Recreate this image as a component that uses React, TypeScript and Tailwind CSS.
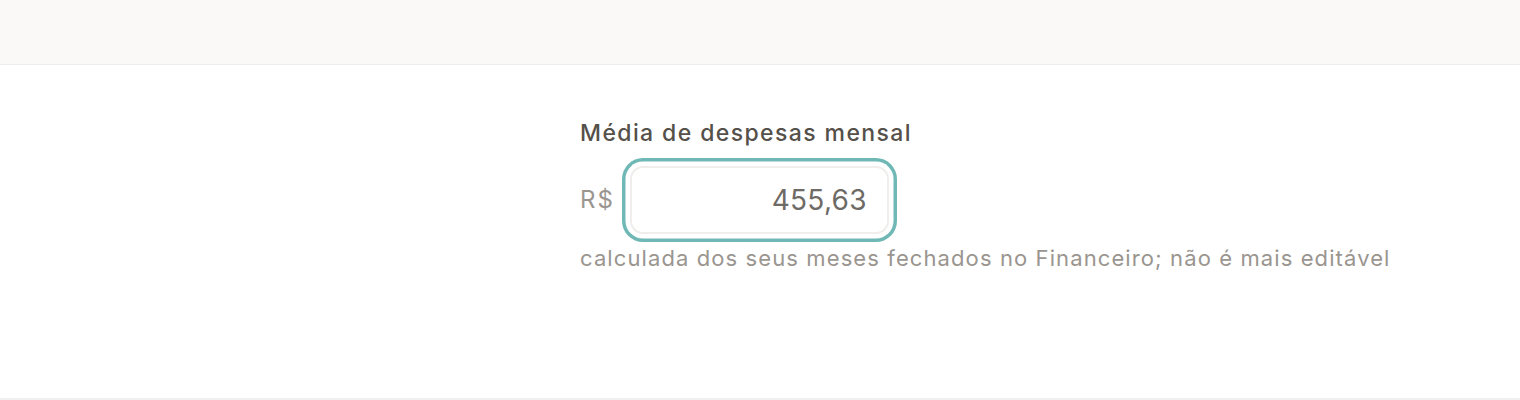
export default function App() {
  return (
    <div className="flex h-[400px] w-full flex-col bg-white font-['Inter',sans-serif]">
      <header className="h-[65px] shrink-0 border-b border-[#efedea] bg-[#faf9f7]" />
      <main className="flex-1 border-b-2 border-[#f0f0f0] pl-[580px] pt-[54px]">
        <label className="block whitespace-nowrap text-[23px] font-medium leading-7 tracking-[1.4px] text-[#55504a]">
          Média de despesas mensal
        </label>
        <div className="mt-[19px] flex items-center gap-[15px]">
          <span className="text-[24px] tracking-[2px] text-[#9a958f]">R$</span>
          <input
            readOnly
            value="455,63"
            className="h-[68px] w-[259px] rounded-[13px] border-2 border-[#efeeec] bg-white pr-[20px] text-right text-[28px] tracking-[0.3px] text-[#6e6a65] outline-none ring-[3.5px] ring-[#6fb8b5] ring-offset-[4.5px]"
          />
        </div>
        <p className="mt-[8px] whitespace-nowrap text-[22px] tracking-[1.1px] text-[#9a958f]">
          calculada dos seus meses fechados no Financeiro; não é mais editável
        </p>
      </main>
    </div>
  );
}
